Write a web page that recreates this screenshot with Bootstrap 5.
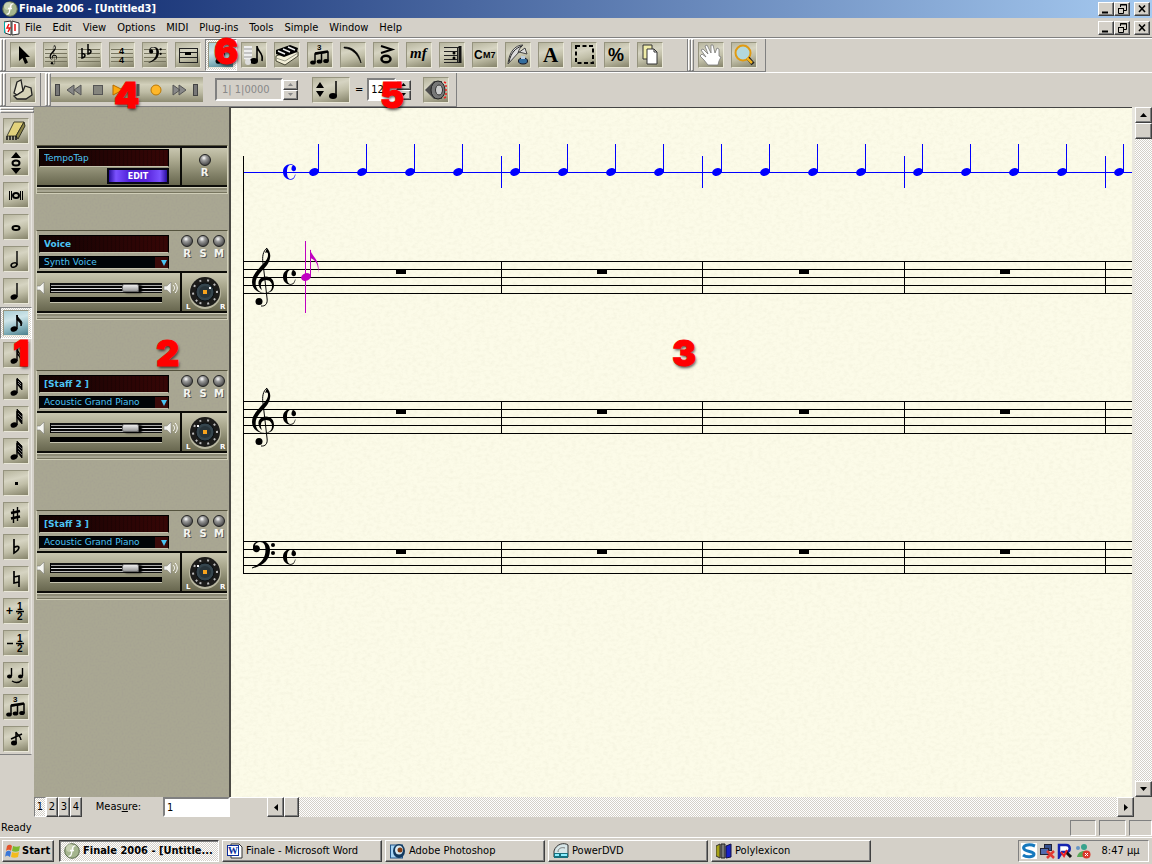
<!DOCTYPE html>
<html lang="en">
<head>
<meta charset="utf-8">
<meta name="viewport" content="width=device-width, initial-scale=1">
<title>Finale 2006 - [Untitled3]</title>
<link href="https://cdn.jsdelivr.net/npm/bootstrap@5.3.0/dist/css/bootstrap.min.css" rel="stylesheet">
<style>
:root{--face:#d4d0c8;--dark:#808080;--deep:#404040}
body{font:11px/14px "DejaVu Sans Condensed","DejaVu Sans",sans-serif;color:#000;background:var(--face)}
button,input,select{font:inherit;color:inherit;border-radius:0}
button{padding:0}
svg{display:block;flex:none}
.bevel{background:var(--face);border:1px solid;border-color:#fff var(--deep) var(--deep) #fff;box-shadow:inset -1px -1px var(--dark)}
.sunk{border:1px solid;border-color:var(--dark) #fff #fff var(--dark)}
.well{border:2px solid;border-color:var(--dark) #fff #fff var(--dark);background:#fff;outline:0}
.dither{background:repeating-conic-gradient(#fff 0 25%,var(--face) 0 50%) 0 0/2px 2px}
.titlebar{height:18px;background:linear-gradient(90deg,#0a246a,#a6caf0);color:#fff;padding:0 2px;gap:1px}
.winbtn{width:16px;height:14px}
.menubar{height:20px;border-bottom:1px solid var(--dark);padding:0 2px 0 4px}
.menubar a{color:#000;text-decoration:none;padding:0 6px 0 5px}
.toolrow{border-top:1px solid #fff}
.strip{border-bottom:1px solid var(--dark);border-right:1px solid var(--dark)}
.grip{width:3px;border:1px solid;border-color:#fff var(--dark) var(--dark) #fff;align-self:stretch}
.gripbar{height:3px;border:1px solid;border-color:#fff var(--dark) var(--dark) #fff}
.tool{width:26px;height:26px;flex:none;border:1px solid;border-color:#96947f #e9e7d8 #e9e7d8 #96947f;
 background:linear-gradient(165deg,#b7b59e,#d6d4c2 35%,#c0bea7 60%,#85836a)}
.tool.chosen{background:linear-gradient(165deg,#a9cdd4,#cfe6ea 35%,#86b3bd 70%,#4b7e8b)}
.chosenbox{padding:2px;border:1px solid;border-color:var(--dark) #fff #fff var(--dark);margin:-3px}
.transport{width:152px;height:25px;background:linear-gradient(#a9a78f,#d2d0bb 30%,#bebca5 60%,#8d8b72)}
.transport button{background:none;border:0;height:24px}
.spin button{width:15px;height:10px;display:flex;align-items:center;justify-content:center}
.palette{width:34px;flex:none}
.palette .tool{margin:0 auto}
.stack{gap:6px;padding:5px 0 2px;width:32px;border-bottom:1px solid var(--dark);border-right:1px solid #e8e6e0}
.mixer{width:197px;flex:none;background:#a9a792;border-right:2px solid #4b4a44;padding:38px 1px 0 2px}
.grainlayer{position:absolute;inset:0;width:100%;height:100%}
.track{position:relative;border:1px solid;border-color:#55533f #d0ceb8 #d0ceb8 #d0ceb8;margin-bottom:50px}
.trackhead{height:40px;padding:4px 0 0 2px}
.metal{background:linear-gradient(#c9c7b0,#a9a78d 35%,#7f7e65 75%,#68674f)}
.ribs{height:8px;border-top:2px solid #0c0c08;background:linear-gradient(#d0ceba 0 1px,#8d8b76 1px 3px,#a8a692 3px 5px,#77755f 5px)}
.lcd{background:repeating-linear-gradient(90deg,#0000 0 3px,#0003 3px 4px),linear-gradient(90deg,#120202,#360606);border:1px solid #000;border-bottom-color:#c5c3ae;color:#4cc4f4;font-family:"DejaVu Sans",sans-serif;font-size:9px;width:130px;padding:0 4px;outline:0;line-height:11px}
.patch{height:13px;appearance:none;background:url("data:image/svg+xml,%3Csvg xmlns='http://www.w3.org/2000/svg' width='7' height='7'%3E%3Cpath d='M0 0H6L3 6Z' fill='%234cc4f4'/%3E%3C/svg%3E") no-repeat 121px 3px,linear-gradient(90deg,#020508 90%,#3a0a0a 90%)}
.led{appearance:none;width:12px;height:12px;margin:0;border-radius:50%;border:1px solid #222;background:radial-gradient(circle at 40% 30%,#fff,#999 30%,#444 80%)}
.ledlabel{width:16px;font:bold 10px/11px "DejaVu Sans",sans-serif;color:#f4f4ee;text-shadow:1px 1px #555}
.ledlabel span{margin-top:1px}
.editbtn{width:62px;height:16px;border:2px solid #080812;background:linear-gradient(90deg,#2a0fa0,#7b52ff 12%,#5020d8 35%,#5824dc 65%,#7b52ff 88%,#2a0fa0);color:#fff;font:bold 8px/11px "DejaVu Sans",sans-serif}
.fader{appearance:none;width:112px;height:10px;margin:2px 0 4px;background:linear-gradient(#111 0 2px,#aaa 2px 3px,#050505 3px 5px,#ddd 5px 6px,#050505 6px 8px,#bbb 8px 9px,#111 9px);border-left:1px solid #000}
.fader::-webkit-slider-thumb{appearance:none;width:17px;height:8px;border-radius:2px;background:linear-gradient(#eee,#999);border:1px solid #666;box-shadow:3px 1px 2px #000}
.meter{width:112px;height:6px;background:#000;border-bottom:1px solid #c5c3ae}
.knobcell{width:47px;border-left:2px solid #0c0c08}
.score{background:#fcfbe8;border-top:1px solid #444;min-width:0;overflow:hidden}
.arrowbtn{width:17px;height:16px;display:flex;align-items:center;justify-content:center;flex:none}
.layerbtn{width:12px;height:20px}
.status{height:19px;padding-left:1px}
.taskbar{height:27px;border-top:1px solid #fff;padding:2px 3px 2px 2px}
.task{width:160px;height:22px;gap:3px;padding-left:4px;display:flex;align-items:center;text-align:left;white-space:nowrap;overflow:hidden;min-width:0}
.task.active{border-color:var(--deep) #fff #fff var(--deep);box-shadow:inset 1px 1px var(--dark);font-weight:bold}
.callout{position:absolute;margin:0;font:900 36px/36px Inter,"Liberation Sans",sans-serif;color:#f00;-webkit-text-stroke:1px #f00;text-shadow:1px 2px 3px #000a;z-index:5}
</style>
</head>
<body>
<svg width="0" height="0" class="position-absolute" aria-hidden="true">
<defs>
<filter id="paper" x="0" y="0" width="100%" height="100%"><feTurbulence type="fractalNoise" baseFrequency=".22 .32" numOctaves="3" seed="4"/><feColorMatrix values="0 0 0 0 .62  0 0 0 0 .6  0 0 0 0 .45  .5 0 0 0 -.2"/></filter>
<filter id="grain" x="0" y="0" width="100%" height="100%"><feTurbulence type="fractalNoise" baseFrequency=".5" numOctaves="2" seed="9"/><feColorMatrix values="0 0 0 0 .35  0 0 0 0 .32  0 0 0 0 .28  .8 0 0 0 -.32"/></filter>
<symbol id="treble" viewBox="0 0 23 59" overflow="visible"><path d="M15 0C11 3 10 9 11 15L15 50C16 56 13 58.500 9 58" fill="none" stroke="currentColor"/><path fill="currentColor" d="M15 0C17 2 19 6 18 10C17 17 12 20 8 25C4 30 3 34 4 38C5 42 8 45 13 45C6 45.500 0 41 0 34C0 27 5 23 9 18C13 14 16 11 16 7C16 5 16 4 13 5ZM13 45C19 45 22 42 22 37C22 32 19 28.500 14 28.500C9 28.500 6 32 6.500 36C7 39 8 41 10 42C9 40 8.500 38 9 36C9.500 33 12 32 14 32C18 32 20 35 20 38C20 42 18 44 13 45Z"/><circle cx="7" cy="53.500" r="3.500" fill="currentColor"/></symbol>
<symbol id="bass" viewBox="0 0 24 28" overflow="visible"><path fill="currentColor" d="M1 6C1 2 4 0 9 0C15 0 18 4 18 9C18 19 11 25 0 27.500V26.500C9 23 13.500 17 13.500 9C13.500 4 12 1 8 1C5 1 3 3 3 4.500A3.500 3.500 0 1 1 1 7Z"/><circle cx="21" cy="4" r="2" fill="currentColor"/><circle cx="21" cy="12" r="2" fill="currentColor"/></symbol>
<symbol id="common" viewBox="0 0 14 16" overflow="visible"><path fill="currentColor" d="M12.600 10.500C12 14 10 15.700 7.500 15.700C3 15.700 0 12 0 8C0 3.500 3 .3 7.500 .3C10 .3 13 2 13 4.500A2.300 2.300 0 1 1 8.600 4C8.600 2.500 9.500 2 10 1.800C9 1 8 1 7.500 1C5.500 1 4 3 4 8C4 13 5.500 15 7.500 15C9.500 15 11.500 13.500 12 10.500Z"/></symbol>
<symbol id="qnote" viewBox="0 0 12 34" overflow="visible"><ellipse cx="5" cy="28" rx="5" ry="3.800" transform="rotate(-20 5 28)" fill="#0000ff"/><path d="M9 0H10V28H9Z" fill="#0000ff"/></symbol>
<symbol id="lines" viewBox="0 0 24 24"><path d="M1 6.500H23M1 10.500H23M1 14.500H23M1 18.500H23" stroke="#77755f" stroke-width="1"/></symbol>
<symbol id="beam3" viewBox="0 0 24 24"><path d="M7 19V11L20 9V18M13.500 18V10" fill="none" stroke="#000" stroke-width="1.500"/><path d="M7 10.500L20 8.500" stroke="#000" stroke-width="2.500"/><ellipse cx="5" cy="19.500" rx="2.800" ry="2"/><ellipse cx="11.500" cy="18.500" rx="2.800" ry="2"/><ellipse cx="18" cy="18" rx="2.800" ry="2"/><text x="9" y="7" font-family="Liberation Sans" font-weight="bold" font-size="8">3</text></symbol>
<symbol id="stemnote" viewBox="0 0 24 24"><ellipse cx="10" cy="18" rx="3.500" ry="2.600" transform="rotate(-20 10 18)"/><path d="M13 18V4" stroke="#000" stroke-width="1.400"/></symbol>
<symbol id="flags" viewBox="0 0 24 24"><path d="M13 4C13 8 17 8 16 14C16 10 13 10 13 8Z"/></symbol>
<symbol id="up" viewBox="0 0 7 4"><path d="M0 4L3.500 0L7 4Z" fill="currentColor"/></symbol>
<symbol id="down" viewBox="0 0 7 4"><path d="M0 0H7L3.500 4Z" fill="currentColor"/></symbol>
<symbol id="min" viewBox="0 0 14 12"><path d="M3 9.500H9" stroke="#000" stroke-width="2"/></symbol>
<symbol id="restore" viewBox="0 0 14 12"><path d="M5.500 4V1.500H11.500V7.500H9M5 2H12M3.500 5.500H8.500V10.500H3.500ZM3 5.500H9" fill="none" stroke="#000"/></symbol>
<symbol id="close" viewBox="0 0 14 12"><path d="M4 2.500L10 9M10 2.500L4 9" stroke="#000" stroke-width="1.600"/></symbol>
<symbol id="finale" viewBox="0 0 16 16"><circle cx="8" cy="8" r="7.300" fill="#a5b58e" stroke="#5b6b4c"/><circle cx="6" cy="5" r="4" fill="#dfe6cb" opacity=".6"/><path d="M11.500 3C9 2 8.500 5 8 8S7 14 4.500 13M6 7.500H10" stroke="#fff" stroke-width="1.300" fill="none"/></symbol>
<symbol id="spk" viewBox="0 0 13 14"><path d="M0 5H3L7 1V13L3 9H0Z" fill="#f5f5f0" stroke="#777" stroke-width=".5"/></symbol>
<symbol id="spkloud" viewBox="0 0 16 14"><path d="M2 5H5L9 1V13L5 9H2Z" fill="#f5f5f0" stroke="#777" stroke-width=".5"/><path d="M11 4C13 6 13 8 11 10M13 2C16 5 16 9 13 12" fill="none" stroke="#fff"/></symbol>
<symbol id="knob" viewBox="0 0 45 38"><circle cx="23" cy="20" r="16" fill="#b9b7a0"/><circle cx="23" cy="19" r="15" fill="#1c1c1a"/><circle cx="23" cy="19" r="12" fill="none" stroke="#bbb" stroke-width="2" stroke-dasharray="2 5.800" transform="rotate(130 23 19)"/><circle cx="23" cy="19" r="9" fill="#35454d" stroke="#0a0f12"/><circle cx="23" cy="19" r="6" fill="#28343a"/><rect x="21" y="17" width="4" height="4" fill="#f8a31c"/><text x="4" y="36" font-family="DejaVu Sans" font-weight="bold" font-size="7" fill="#fff">L</text><text x="38" y="36" font-family="DejaVu Sans" font-weight="bold" font-size="7" fill="#fff">R</text></symbol>
<g id="staff"><path d="M243 .5H3000M243 8.500H3000M243 16.500H3000M243 24.500H3000M243 32.500H3000M501.500 0V33M702.500 0V33M904.500 0V33M1105.500 0V33" stroke="#000"/><path d="M396 8H406V13H396ZM597 8H607V13H597ZM799 8H809V13H799ZM1000 8H1010V13H1000Z"/><use href="#common" x="283" y="8" width="14" height="16"/></g>
<g id="fournotes"><use href="#qnote" x="309" y="144" width="12" height="34"/><use href="#qnote" x="357" y="144" width="12" height="34"/><use href="#qnote" x="405" y="144" width="12" height="34"/><use href="#qnote" x="453" y="144" width="12" height="34"/><path d="M501 156H502V188H501Z" fill="#0000ff"/></g>
</defs></svg>

<div class="vh-100 d-flex flex-column position-relative overflow-hidden">
<header class="titlebar d-flex align-items-center fw-bold flex-shrink-0"><svg width="16" height="16"><use href="#finale"/></svg><span class="flex-grow-1">Finale 2006 - [Untitled3]</span>
<div class="d-flex"><button class="bevel winbtn" aria-label="Minimize"><svg width="14" height="12"><use href="#min"/></svg></button><button class="bevel winbtn me-1" aria-label="Restore"><svg width="14" height="12"><use href="#restore"/></svg></button><button class="bevel winbtn" aria-label="Close"><svg width="14" height="12"><use href="#close"/></svg></button></div></header>
<nav class="menubar d-flex align-items-center flex-shrink-0"><svg width="16" height="16"><path d="M0 2L7 1V15L1 13ZM8 1L15 3V14L8 15Z" fill="#fff" stroke="#333"/><path d="M0 2V13" stroke="#0aa" stroke-width="2"/><path d="M5 4L3 8H6L4 12M11 4V11" stroke="#e11" stroke-width="1.500" fill="none"/></svg>
<a href="#">File</a><a href="#">Edit</a><a href="#">View</a><a href="#">Options</a><a href="#">MIDI</a><a href="#">Plug-ins</a><a href="#">Tools</a><a href="#">Simple</a><a href="#">Window</a><a href="#">Help</a>
<button class="bevel winbtn ms-auto" aria-label="Minimize document"><svg width="14" height="12"><use href="#min"/></svg></button><button class="bevel winbtn me-1" aria-label="Restore document"><svg width="14" height="12"><use href="#restore"/></svg></button><button class="bevel winbtn" aria-label="Close document"><svg width="14" height="12"><use href="#close"/></svg></button></nav>

<div class="toolrow d-flex flex-shrink-0">
<div class="strip d-flex align-items-center pe-4" style="height:33px"><i class="grip"></i><i class="grip me-1"></i>
<div class="d-flex align-items-center" style="gap:7px">
<button class="tool" aria-label="Selection"><svg width="24" height="24"><path d="M8 3V18L11.500 15L14 21L17 19.500L14.500 14H19Z"/></svg></button>
<button class="tool" aria-label="Staff"><svg width="24" height="24"><use href="#lines"/><use href="#treble" x="4" y="2" width="11" height="20"/></svg></button>
<button class="tool" aria-label="Key signature"><svg width="24" height="24"><use href="#lines"/><path d="M5 5V15C9 14 9 10 5 11M11 1V11C15 10 15 6 11 7" fill="none" stroke="#000" stroke-width="1.500"/></svg></button>
<button class="tool" aria-label="Time signature"><svg width="24" height="24"><use href="#lines"/><g font-family="Liberation Sans" font-weight="bold" font-size="9"><text x="9" y="11">4</text><text x="9" y="20">4</text></g></svg></button>
<button class="tool" aria-label="Clef"><svg width="24" height="24"><use href="#lines"/><use href="#bass" x="5" y="4" width="15" height="16"/></svg></button>
<button class="tool" aria-label="Measure"><svg width="24" height="24"><path d="M3.500 5V20M21.500 5V20M3 5.500H22M3 9.500H22M3 14.500H22M3 19.500H22" stroke="#222"/><path d="M9 9H15V12H9Z"/></svg></button>
<div class="chosenbox dither"><button class="tool chosen d-block" aria-label="Simple entry"><svg width="24" height="24"><use href="#stemnote"/><use href="#flags"/></svg></button></div>
<button class="tool" aria-label="Speedy entry"><svg width="24" height="24"><path d="M2 3H10V19L2 16Z" fill="#eee"/><path d="M2 6H10M2 10H10M2 14H10" stroke="#999"/><ellipse cx="12" cy="18" rx="4" ry="3"/><path d="M15 18V3C15 9 22 9 20 18" fill="none" stroke="#000" stroke-width="1.600"/><circle cx="6" cy="19" r="3" fill="#ddd"/></svg></button>
<button class="tool" aria-label="HyperScribe"><svg width="24" height="24"><path d="M1 13L15 8L23 9V13L10 22L1 18Z" fill="#f3efd8" stroke="#443"/><path d="M1 7L15 2L23 5L22 9L9 14L1 11Z"/><path d="M3 8L10 11M8 6L15 9M13 4L20 7" stroke="#eee" stroke-width="1.500"/><path d="M1 15L10 18L23 10" fill="none" stroke="#998"/></svg></button>
<button class="tool" aria-label="Tuplet"><svg width="24" height="24"><use href="#beam3"/></svg></button>
<button class="tool" aria-label="Smart shape"><svg width="24" height="24"><path d="M3 4C11 4 18 8 20 20C16 10 11 6 3 5Z" stroke="#000" stroke-width=".6"/></svg></button>
<button class="tool" aria-label="Articulation"><svg width="24" height="24"><path d="M7 3L18 6.500L7 10" fill="none" stroke="#000" stroke-width="2"/><ellipse cx="12" cy="16" rx="4.500" ry="3.300" fill="none" stroke="#000" stroke-width="2.500"/></svg></button>
<button class="tool" aria-label="Expression"><svg width="24" height="24"><text x="3" y="15" font-family="Liberation Serif" font-style="italic" font-weight="bold" font-size="15">mf</text></svg></button>
<button class="tool" aria-label="Repeat"><svg width="24" height="24"><path d="M4 4.500H20M4 8.500H17M4 12.500H17M4 16.500H17M4 19.500H20M17.500 4V20" stroke="#222"/><path d="M20 3V20" stroke="#111" stroke-width="3"/><circle cx="14" cy="10" r="1.500"/><circle cx="14" cy="15" r="1.500"/></svg></button>
<button class="tool" aria-label="Chord"><svg width="24" height="24"><g font-family="Liberation Sans" font-weight="bold"><text x="1" y="16" font-size="12">C</text><text x="10" y="15" font-size="9">M7</text></g></svg></button>
<button class="tool" aria-label="Lyrics"><svg width="24" height="24"><path d="M2 21C3 9 9 2 17 2C14 5 13 6 12 10L19 5L21 11L13 9Z" fill="#ddd" stroke="#444"/><path d="M3 19C5 9 10 5 16 3" fill="none" stroke="#222"/><ellipse cx="17" cy="18" rx="4.500" ry="3" fill="#336d9e" stroke="#112"/><rect x="15" y="13" width="4" height="3" fill="#bcd"/></svg></button>
<button class="tool" aria-label="Text"><svg width="24" height="24"><text x="4" y="19" font-family="Liberation Serif" font-weight="bold" font-size="21">A</text></svg></button>
<button class="tool" aria-label="Mass edit"><svg width="24" height="24"><rect x="4" y="3" width="17" height="17" fill="none" stroke="#000" stroke-width="2" stroke-dasharray="4 2.500"/></svg></button>
<button class="tool" aria-label="Resize"><svg width="24" height="24"><text x="3" y="18" font-family="Liberation Sans" font-weight="bold" font-size="18">%</text></svg></button>
<button class="tool" aria-label="Page layout"><svg width="24" height="24"><path d="M5 2H14V16H5Z" fill="#f0eca8" stroke="#333"/><path d="M9 6H16L19 9V21H9Z" fill="#fff" stroke="#333"/><path d="M16 6V9H19" fill="none" stroke="#333"/></svg></button>
</div></div>
<div class="strip d-flex align-items-center pe-2" style="height:33px"><i class="grip"></i><i class="grip me-1"></i><div class="d-flex" style="gap:7px">
<button class="tool" aria-label="Hand grabber"><svg width="24" height="24"><path d="M9 22L5 17L1 13L3 11L7 14L2 7L4 6L9 11L6 3L8 2L12 10L12 2H14L16 10L18 5L20 6L20 13L22 14L20 18L19 22Z" fill="#fff" stroke="#777" stroke-width=".8"/></svg></button>
<button class="tool" aria-label="Zoom"><svg width="24" height="24"><circle cx="11" cy="10" r="7.500" fill="#b3d8dc" stroke="#e09a12" stroke-width="2"/><path d="M16 15L21 21" stroke="#222" stroke-width="4"/><path d="M15 15L20 20" stroke="#f2b21c" stroke-width="2.500"/></svg></button></div></div>
</div>
<div class="toolrow d-flex flex-shrink-0">
<div class="strip d-flex align-items-center pe-1" style="height:34px"><i class="grip"></i><i class="grip me-1"></i><button class="tool" aria-label="Book"><svg width="24" height="24"><path d="M6 4L10 2L12 13L6 17L3 15Z" fill="#e5e2cc" stroke="#222" stroke-width="1.300"/><path d="M12 13L14 8L20 10L21 17L15 21H6L3 18L6 17Z" fill="#d6d3b7" stroke="#222" stroke-width="1.300"/></svg></button></div>
<div class="strip d-flex align-items-center" style="height:34px;padding-right:7px"><i class="grip ms-1"></i><i class="grip"></i>
<div class="transport d-flex align-items-center">
<button aria-label="Start of piece" style="width:15px"><svg width="15" height="14"><rect x="4.500" y="1.500" width="4" height="11" fill="#777" stroke="#444"/></svg></button>
<button aria-label="Rewind"><svg width="18" height="14"><path d="M8 2V12L1 7ZM15 2V12L8 7Z" fill="#888" stroke="#555"/></svg></button>
<button aria-label="Stop"><svg width="26" height="14"><rect x="9.500" y="2.500" width="9" height="9" fill="#85857e" stroke="#555"/></svg></button>
<button aria-label="Play"><svg width="18" height="14"><path d="M3 2L13 7L3 12Z" fill="#fca90e" stroke="#b56b00"/></svg></button>
<button aria-label="Pause"><svg width="18" height="14"><path d="M6 1V13M10 1V13" stroke="#555" stroke-width="3"/></svg></button>
<button aria-label="Record"><svg width="22" height="14"><circle cx="10" cy="7" r="5" fill="#ffb72a" stroke="#b97706"/></svg></button>
<button aria-label="Fast forward"><svg width="20" height="14"><path d="M5 2V12L12 7ZM11 2V12L18 7Z" fill="#888" stroke="#555"/></svg></button>
<button aria-label="End of piece"><svg width="12" height="14"><rect x="5.500" y="1.500" width="4" height="11" fill="#777" stroke="#444"/></svg></button>
</div>
<input class="well" style="width:68px;height:23px;background:var(--face);color:#888;padding:0 5px;margin-left:12px" value="1| 1|0000" disabled aria-label="Playback position">
<span class="spin"><button class="bevel" aria-label="Position up"><svg width="5" height="3" color="#888"><use href="#up"/></svg></button><button class="bevel" aria-label="Position down"><svg width="5" height="3" color="#888"><use href="#down"/></svg></button></span>
<button class="tool" style="width:38px;margin-left:14px" aria-label="Beat unit"><svg width="36" height="24"><path d="M3 10L7 4L11 10ZM3 13H11L7 19Z"/><ellipse cx="20" cy="18" rx="4" ry="3"/><path d="M23 18V3" stroke="#000" stroke-width="1.500"/></svg></button>
<label for="tempo" style="padding:0 4px 0 5px">=</label>
<input id="tempo" class="well" style="width:29px;height:23px;padding:0 2px" value="120">
<span class="spin"><button class="bevel" aria-label="Tempo up"><svg width="5" height="3"><use href="#up"/></svg></button><button class="bevel" aria-label="Tempo down"><svg width="5" height="3"><use href="#down"/></svg></button></span>
<button class="tool" style="margin-left:12px" aria-label="Playback settings"><svg width="24" height="24"><path d="M1 12L10 3H18V21H10Z" fill="#4d4d4d"/><ellipse cx="14" cy="12" rx="7" ry="9" fill="#777" stroke="#222"/><ellipse cx="15" cy="12" rx="3.500" ry="5" fill="#ccc" stroke="#333"/><path d="M20 4L22 5M21 8H23M21 12H23M21 16H23M20 20L22 19" stroke="#e22" stroke-width="1.500"/></svg></button></div>
</div>

<main class="d-flex flex-grow-1" style="min-height:0">
<aside class="palette"><div class="gripbar"></div><div class="gripbar"></div>
<div class="stack d-flex flex-column">
<button class="tool" aria-label="Eraser"><svg width="24" height="24"><path d="M10 3H20L12 17H3Z" fill="#e2d27c" stroke="#443"/><path d="M20 3L21 7L14 20L12 17Z" fill="#8b8345" stroke="#332"/><path d="M3 17V21M6 17V21M9 17V21M12 17V21" stroke="#111" stroke-width="1.500"/></svg></button>
<button class="tool" aria-label="Repitch"><svg width="24" height="24"><path d="M7 7H17L12 1ZM7 17H17L12 23Z"/><ellipse cx="12" cy="12" rx="3.500" ry="2.500" fill="none" stroke="#000" stroke-width="2"/></svg></button>
<button class="tool" aria-label="Double whole note"><svg width="24" height="24"><path d="M5.500 8V17M7.500 8V17M16.500 8V17M18.500 8V17" stroke="#000"/><ellipse cx="12" cy="12.500" rx="3" ry="2.500" fill="none" stroke="#000" stroke-width="2"/></svg></button>
<button class="tool" aria-label="Whole note"><svg width="24" height="24"><ellipse cx="12" cy="13" rx="3.500" ry="2" fill="none" stroke="#000" stroke-width="2"/></svg></button>
<button class="tool" aria-label="Half note"><svg width="24" height="24"><ellipse cx="10" cy="18" rx="3" ry="2" transform="rotate(-25 10 18)" fill="none" stroke="#000" stroke-width="1.500"/><path d="M13 18V4" stroke="#000" stroke-width="1.400"/></svg></button>
<button class="tool" aria-label="Quarter note"><svg width="24" height="24"><use href="#stemnote"/></svg></button>
<div class="chosenbox dither align-self-center"><button class="tool chosen d-block" aria-label="Eighth note"><svg width="24" height="24"><use href="#stemnote"/><path d="M13 4C14 9 20 9 17 15C17 11 14 10 13 9Z" stroke="#000"/></svg></button></div>
<button class="tool" aria-label="16th note"><svg width="24" height="24"><use href="#stemnote"/><use href="#flags"/><use href="#flags" y="3"/></svg></button>
<button class="tool" aria-label="32nd note"><svg width="24" height="24"><use href="#stemnote"/><path d="M13 3L18 8V15L13 9ZM13 9L18 13" stroke="#000" stroke-width=".8"/><path d="M14 6L17 9M14 8L17 11" stroke="#bbb" stroke-width=".7"/></svg></button>
<button class="tool" aria-label="64th note"><svg width="24" height="24"><use href="#stemnote"/><path d="M13 2L18 7V17L13 11Z" stroke="#000" stroke-width=".8"/><path d="M14 6L18 10M14 9L18 13" stroke="#999" stroke-width=".7"/></svg></button>
<button class="tool" aria-label="128th note"><svg width="24" height="24"><use href="#stemnote"/><path d="M13 2L18 7V19L13 13Z" stroke="#000" stroke-width=".8"/><path d="M14 6L18 10M14 9L18 13M14 12L18 16" stroke="#999" stroke-width=".7"/></svg></button>
<button class="tool" aria-label="Dot"><svg width="24" height="24"><rect x="11" y="11" width="3" height="3"/></svg></button>
<button class="tool" aria-label="Sharp"><svg width="24" height="24"><path d="M9.500 6V20M13.500 4V18" stroke="#000" stroke-width="1.400"/><path d="M7 10L16 8M7 15.500L16 13.500" stroke="#000" stroke-width="2.400"/></svg></button>
<button class="tool" aria-label="Flat"><svg width="24" height="24"><path d="M10 4V18C17 14 16 9 10 12.500" fill="none" stroke="#000" stroke-width="1.700"/></svg></button>
<button class="tool" aria-label="Natural"><svg width="24" height="24"><path d="M10 4V16L15 15M10 10L15 9V20" fill="none" stroke="#000" stroke-width="1.700"/></svg></button>
<button class="tool" aria-label="Raise half step"><svg width="24" height="24"><g font-family="Liberation Sans" font-weight="bold"><text x="2" y="16" font-size="12">+</text><text x="13" y="11" font-size="10">1</text><text x="13" y="21" font-size="10">2</text></g><path d="M12 12.500H20" stroke="#000" stroke-width="1.500"/></svg></button>
<button class="tool" aria-label="Lower half step"><svg width="24" height="24"><g font-family="Liberation Sans" font-weight="bold"><text x="13" y="11" font-size="10">1</text><text x="13" y="21" font-size="10">2</text></g><path d="M12 12.500H20M3 12.500H9" stroke="#000" stroke-width="1.700"/></svg></button>
<button class="tool" aria-label="Tie"><svg width="24" height="24"><path d="M7.500 13V5M18.500 13V5M8 18C11 20 15 20 18 17" fill="none" stroke="#000" stroke-width="1.400"/><ellipse cx="5.500" cy="13.500" rx="2.500" ry="2"/><ellipse cx="16.500" cy="13.500" rx="2.500" ry="2"/></svg></button>
<button class="tool" aria-label="Triplet"><svg width="24" height="24"><use href="#beam3"/></svg></button>
<button class="tool" aria-label="Grace note"><svg width="24" height="24"><ellipse cx="10" cy="16" rx="3" ry="2.500"/><path d="M12 16V5C13 8 17 9 17 13M7 12L18 7" fill="none" stroke="#000" stroke-width="1.500"/></svg></button>
</div></aside>

<div class="d-flex flex-column flex-grow-1" style="min-width:0">
<div class="d-flex flex-grow-1" style="min-height:0">
<section class="mixer position-relative overflow-hidden"><svg class="grainlayer" aria-hidden="true"><rect width="100%" height="100%" filter="url(#grain)"/></svg>
<div class="track" style="margin-bottom:36px"><div class="d-flex metal" style="height:39px;border-top:2px solid #111"><div class="flex-grow-1"><input class="lcd d-block" style="height:18px;margin:1px 0 0 2px" value="TempoTap" aria-label="Track name"><button class="editbtn d-block" style="margin:1px 0 0 70px">EDIT</button></div><div class="knobcell d-flex flex-column align-items-center" style="padding-top:6px"><label class="ledlabel d-flex flex-column align-items-center"><input type="checkbox" class="led"><span>R</span></label></div></div><div class="ribs"></div></div>

<div class="track"><div class="trackhead d-flex justify-content-between"><div><input class="lcd d-block fw-bold" style="height:18px" value="Voice" aria-label="Track name"><select class="lcd patch d-block" style="margin-top:3px" aria-label="Instrument"><option>Synth Voice</option></select></div><div class="d-flex"><label class="ledlabel d-flex flex-column align-items-center"><input type="checkbox" class="led"><span>R</span></label><label class="ledlabel d-flex flex-column align-items-center"><input type="checkbox" class="led"><span>S</span></label><label class="ledlabel d-flex flex-column align-items-center"><input type="checkbox" class="led"><span>M</span></label></div></div>
<div class="d-flex metal" style="height:40px;border-top:2px solid #0c0c08"><div class="flex-grow-1 d-flex pt-2"><svg width="13" height="14"><use href="#spk"/></svg><div><input type="range" class="fader d-block" value="76" aria-label="Volume"><div class="meter"></div></div><svg width="16" height="14"><use href="#spkloud"/></svg></div><div class="knobcell"><svg width="45" height="38"><use href="#knob"/><rect x="27" y="14" width="2" height="2" fill="#fff"/></svg></div></div><div class="ribs"></div></div>

<div class="track"><div class="trackhead d-flex justify-content-between"><div><input class="lcd d-block fw-bold" style="height:18px" value="[Staff 2 ]" aria-label="Track name"><select class="lcd patch d-block" style="margin-top:3px" aria-label="Instrument"><option>Acoustic Grand Piano</option></select></div><div class="d-flex"><label class="ledlabel d-flex flex-column align-items-center"><input type="checkbox" class="led"><span>R</span></label><label class="ledlabel d-flex flex-column align-items-center"><input type="checkbox" class="led"><span>S</span></label><label class="ledlabel d-flex flex-column align-items-center"><input type="checkbox" class="led"><span>M</span></label></div></div>
<div class="d-flex metal" style="height:40px;border-top:2px solid #0c0c08"><div class="flex-grow-1 d-flex pt-2"><svg width="13" height="14"><use href="#spk"/></svg><div><input type="range" class="fader d-block" value="76" aria-label="Volume"><div class="meter"></div></div><svg width="16" height="14"><use href="#spkloud"/></svg></div><div class="knobcell"><svg width="45" height="38"><use href="#knob"/><rect x="15" y="12" width="2" height="2" fill="#fff"/></svg></div></div><div class="ribs"></div></div>

<div class="track"><div class="trackhead d-flex justify-content-between"><div><input class="lcd d-block fw-bold" style="height:18px" value="[Staff 3 ]" aria-label="Track name"><select class="lcd patch d-block" style="margin-top:3px" aria-label="Instrument"><option>Acoustic Grand Piano</option></select></div><div class="d-flex"><label class="ledlabel d-flex flex-column align-items-center"><input type="checkbox" class="led"><span>R</span></label><label class="ledlabel d-flex flex-column align-items-center"><input type="checkbox" class="led"><span>S</span></label><label class="ledlabel d-flex flex-column align-items-center"><input type="checkbox" class="led"><span>M</span></label></div></div>
<div class="d-flex metal" style="height:40px;border-top:2px solid #0c0c08"><div class="flex-grow-1 d-flex pt-2"><svg width="13" height="14"><use href="#spk"/></svg><div><input type="range" class="fader d-block" value="76" aria-label="Volume"><div class="meter"></div></div><svg width="16" height="14"><use href="#spkloud"/></svg></div><div class="knobcell"><svg width="45" height="38"><use href="#knob"/><rect x="15" y="12" width="2" height="2" fill="#fff"/></svg></div></div><div class="ribs"></div></div>
</section>
<section class="score flex-grow-1 position-relative" aria-label="Score"><svg class="grainlayer"><rect width="100%" height="100%" filter="url(#paper)" opacity=".6"/>
<g transform="translate(-231 -108)">
<path d="M243 172H3000V173H243Z" fill="#0000ff"/><g color="#0000ff"><use href="#common" x="283" y="164" width="14" height="16"/></g><use href="#fournotes"/><use href="#fournotes" x="201"/><use href="#fournotes" x="403"/><use href="#fournotes" x="604"/><use href="#fournotes" x="805"/>
<path d="M243.500 156V574" stroke="#000"/>
<use href="#staff" y="261"/><use href="#staff" y="401"/><use href="#staff" y="541"/>
<use href="#treble" x="252" y="248" width="23" height="59"/><use href="#treble" x="252" y="388" width="23" height="59"/><use href="#bass" x="252" y="541" width="24" height="28"/>
<g fill="#c000c0"><path d="M305 241H306V313H305ZM310 250H311V277H310Z"/><ellipse cx="306" cy="277" rx="5" ry="3.800" transform="rotate(-20 306 277)"/><path d="M310 249C311 256 321 260 318 273C319 263 314 259 310 258Z"/></g>
</g></svg></section>
<div class="d-flex flex-column dither" style="width:20px;border-left:3px solid #e9e7df"><button class="bevel arrowbtn" aria-label="Scroll up"><svg width="7" height="4"><use href="#up"/></svg></button><button class="bevel arrowbtn mb-auto" aria-label="Vertical scroll thumb"></button><button class="bevel arrowbtn" aria-label="Scroll down"><svg width="7" height="4"><use href="#down"/></svg></button></div>
</div>
<div class="d-flex flex-shrink-0" style="height:21px">
<button class="sunk layerbtn dither">1</button><button class="bevel layerbtn">2</button><button class="bevel layerbtn">3</button><button class="bevel layerbtn">4</button>
<label for="measure" class="text-center" style="width:81px;padding-right:8px;line-height:20px">Meas<u>u</u>re:</label><input id="measure" class="well" style="width:67px;height:20px;padding:0 2px" value="1">
<div style="width:37px;border-top:1px solid #fff"></div>
<div class="dither flex-grow-1 d-flex" style="margin-bottom:1px"><button class="bevel arrowbtn h-100" aria-label="Scroll left"><svg width="4" height="7"><path d="M4 0L0 3.500L4 7Z"/></svg></button><button class="bevel arrowbtn h-100 me-auto" style="width:15px" aria-label="Horizontal scroll thumb"></button><button class="bevel arrowbtn h-100" aria-label="Scroll right"><svg width="4" height="7"><path d="M0 0L4 3.500L0 7Z"/></svg></button></div><div style="width:18px"></div></div>
</div></main>
<footer class="status d-flex align-items-center flex-shrink-0"><span class="flex-grow-1">Ready</span><div class="d-flex" style="gap:3px"><div class="sunk" style="width:26px;height:16px"></div><div class="sunk" style="width:27px;height:16px"></div><div class="sunk" style="width:23px;height:16px"></div></div></footer>
<div class="taskbar d-flex flex-shrink-0">
<button class="bevel fw-bold d-flex align-items-center" style="width:52px;height:22px;gap:1px;padding-left:2px;margin-right:5px"><svg width="16" height="16"><path d="M2 3C4 1 6 2 7 3L6 8C5 7 3 6 1 8Z" fill="#e4542b"/><path d="M8 3C10 4 13 4 15 3L14 8C12 9 9 9 7 8Z" fill="#7cb82f"/><path d="M1 9C3 7 5 8 6 9L5 14C3 13 2 12 0 14Z" fill="#3b78d8"/><path d="M7 9C9 10 12 10 14 9L13 14C11 15 8 15 6 14Z" fill="#f3bb1c"/></svg>Start</button>
<div class="d-flex flex-grow-1" style="gap:3px;min-width:0">
<button class="bevel task active dither"><svg width="16" height="16"><use href="#finale"/></svg><span>Finale 2006 - [Untitle...</span></button>
<button class="bevel task"><svg width="16" height="16"><path d="M4 1H12L15 4V15H4Z" fill="#fff" stroke="#333"/><rect x=".5" y="2.500" width="11" height="10" fill="#fff" stroke="#0a2e9c"/><text x="1" y="11" font-family="Liberation Serif" font-weight="bold" font-size="10" fill="#0a2e9c">W</text></svg><span>Finale - Microsoft Word</span></button>
<button class="bevel task"><svg width="16" height="16"><rect x=".5" y="2" width="12" height="13" fill="#a6d4f4" stroke="#258"/><ellipse cx="9" cy="8" rx="6" ry="7" fill="#123a60"/><ellipse cx="9" cy="7" rx="4" ry="4.500" fill="#d8e8ef"/><circle cx="10" cy="7" r="2.500" fill="#833c12"/></svg><span>Adobe Photoshop</span></button>
<button class="bevel task"><svg width="16" height="16"><path d="M1 14V8C3 1 11 -1 15 2V14Z" fill="#d6e6e8" stroke="#333"/><path d="M5 9C5 5 9 4 12 5" fill="none" stroke="#777"/><rect x="1" y="10" width="14" height="5" fill="#16707e"/><path d="M2 12H6M8 12H14" stroke="#8ef" stroke-width="2"/></svg><span>PowerDVD</span></button>
<button class="bevel task"><svg width="16" height="16"><path d="M0 3L4 1V15L0 13Z" fill="#a8a318" stroke="#333"/><path d="M5 1H9V15H5Z" fill="#777" stroke="#222"/><path d="M10 3L15 1V14L10 15Z" fill="#1821c8" stroke="#114"/></svg><span>Polylexicon</span></button></div>
<div class="sunk d-flex align-items-center" style="width:131px;height:22px;gap:2px;padding-left:2px"><svg width="16" height="16"><rect width="16" height="16" fill="#fff"/><path d="M14 3C7 0 1 3 3 6S13 8 13 11S6 15 2 12" fill="none" stroke="#1678bd" stroke-width="3"/></svg><svg width="16" height="16"><rect x="5.500" y="1.500" width="7" height="6" fill="#36518f" stroke="#223"/><rect x="1.500" y="5.500" width="8" height="6" fill="#506bb0" stroke="#223"/><path d="M8 8L15 15M15 8L8 15" stroke="#e33b32" stroke-width="2.500"/></svg><svg width="16" height="16"><path d="M2 2H9C14 2 14 9 9 9H5L2 14Z" fill="#fff" stroke="#1624b0" stroke-width="2.500"/><path d="M9 9L14 14" stroke="#111" stroke-width="3"/><path d="M4 9L7 13L10 7" stroke="#e22" stroke-width="2" fill="none"/></svg><svg width="16" height="16"><circle cx="9" cy="4" r="3" fill="#38a38d"/><path d="M2 14C3 7 14 5 14 14Z" fill="#58a858"/><circle cx="3" cy="5" r="2" fill="#6595c4"/><circle cx="11.500" cy="11.500" r="4" fill="#dc382b"/><path d="M10 10L13 13M13 10L10 13" stroke="#fff"/></svg><span class="flex-grow-1 text-center">8:47 μμ</span></div>
</div>
<p class="callout" style="left:13px;top:335px">1</p><p class="callout" style="left:156px;top:335px">2</p><p class="callout" style="left:672px;top:335px">3</p><p class="callout" style="left:114px;top:77px">4</p><p class="callout" style="left:380px;top:77px">5</p><p class="callout" style="left:214px;top:33px">6</p>
</div>
<script src="https://cdn.jsdelivr.net/npm/bootstrap@5.3.0/dist/js/bootstrap.bundle.min.js"></script>
</body>
</html>
